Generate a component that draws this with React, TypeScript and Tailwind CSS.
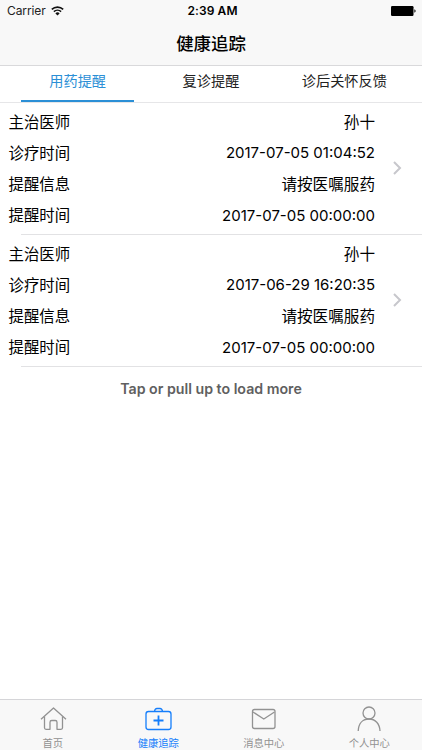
import { ReactNode } from "react";

type Reminder = {
  doctor: string;
  visitTime: string;
  message: string;
  remindTime: string;
};

const reminders: Reminder[] = [
  { doctor: "孙十", visitTime: "2017-07-05 01:04:52", message: "请按医嘱服药", remindTime: "2017-07-05 00:00:00" },
  { doctor: "孙十", visitTime: "2017-06-29 16:20:35", message: "请按医嘱服药", remindTime: "2017-07-05 00:00:00" },
];

const tabs = ["用药提醒", "复诊提醒", "诊后关怀反馈"];

function StatusBar() {
  return (
    <div className="grid h-[22px] grid-cols-3 items-center pl-[7px] pr-[6px] text-[12px] leading-[22px]">
      <div className="flex items-center gap-[5px] text-[#222]">
        <span className="tracking-[-0.1px]">Carrier</span>
        <svg width="13" height="10" viewBox="0 0 13 10" fill="none" stroke="#111" strokeWidth="1.6">
          <path d="M0.8 3.4a8.2 8.2 0 0 1 11.4 0" />
          <path d="M2.9 5.7a5.2 5.2 0 0 1 7.2 0" />
          <path d="M6.5 9.5 4.4 7.4a3 3 0 0 1 4.2 0z" fill="#111" stroke="none" />
        </svg>
      </div>
      <span className="pl-[2px] text-center font-semibold tracking-[0.1px]">2:39 AM</span>
      <svg className="justify-self-end" width="25" height="10" viewBox="0 0 25 10">
        <rect x="0" y="0" width="22.5" height="10" rx="1.2" fill="#000" />
        <path d="M23.4 3.3c1.6.6 1.6 2.8 0 3.4z" fill="#000" />
      </svg>
    </div>
  );
}

function Field({ label, value, numeric }: { label: string; value: string; numeric?: boolean }) {
  return (
    <div className="flex h-[31.2px] items-center justify-between">
      <span>{label}</span>
      <span className={numeric ? "text-[15px]" : "text-[15.6px]"}>{value}</span>
    </div>
  );
}

function ReminderRow({ item }: { item: Reminder }) {
  return (
    <li>
      <div className="flex h-[131px] items-center pl-[8.5px] pr-[20px] text-[15.4px]">
        <div className="w-[366.5px] pt-[1.2px]">
          <Field label="主治医师" value={item.doctor} />
          <Field label="诊疗时间" value={item.visitTime} numeric />
          <Field label="提醒信息" value={item.message} />
          <Field label="提醒时间" value={item.remindTime} numeric />
        </div>
        <svg className="mb-[2px] ml-[18px]" width="9" height="14" viewBox="0 0 9 14" fill="none" stroke="#c7c7cc" strokeWidth="2">
          <path d="M1 1l6 6-6 6" />
        </svg>
      </div>
      <div className="ml-[21px] h-px bg-[#e2e2e4]" />
    </li>
  );
}

function NavItem({ label, active, children }: { label: string; active?: boolean; children: ReactNode }) {
  return (
    <a className={`flex flex-1 flex-col items-center pt-[4px] ${active ? "text-[#157efb]" : "text-[#929292]"}`}>
      <svg className="shrink-0" width="30" height="30" viewBox="0 0 30 30" fill="none" stroke="currentColor" strokeWidth="1.3" strokeLinejoin="round">
        {children}
      </svg>
      <span className="text-[10.3px] leading-[18px]">{label}</span>
    </a>
  );
}

export default function App() {
  return (
    <div className="flex h-[750px] w-[422px] flex-col overflow-hidden bg-white font-[Inter,'Noto_Sans_CJK_SC',sans-serif] text-black">
      <header className="h-[66px] border-b border-[#d9d9db] bg-[#f8f8f8]">
        <StatusBar />
        <h1 className="text-center text-[17.4px] font-medium leading-[43px]">健康追踪</h1>
      </header>

      <nav className="flex h-[37px] border-b border-[#e6e6e8] px-[11px] text-[14.2px]">
        {tabs.map((tab, i) => (
          <div key={tab} className="flex-1 px-[10px]">
            <div className={`-mx-[10px] h-[34px] text-center leading-[30px] ${i === 0 ? "text-[#2b8fd6]" : "text-[#222]"}`}>{tab}</div>
            {i === 0 && <div className="h-[2px] bg-[#2b8fd6]" />}
          </div>
        ))}
      </nav>

      <main className="flex-1">
        <ul>
          {reminders.map((item) => (
            <ReminderRow key={item.visitTime} item={item} />
          ))}
        </ul>
        <p className="text-center text-[14.2px] font-semibold leading-[44px] text-[#606060]">Tap or pull up to load more</p>
      </main>

      <footer className="flex h-[51px] border-t border-[#d5d5d8] bg-[#f8f8f8]">
        <NavItem label="首页">
          <path d="M3 15.2 15.5 4 28 15.2" />
          <path d="M6.5 12.5v11.3q0 1.5 1.5 1.5h4v-7q0-1.8 1.8-1.8h3.4q1.8 0 1.8 1.8v7h4q1.5 0 1.5-1.5V12.5" />
        </NavItem>
        <NavItem label="健康追踪" active>
          <rect x="3" y="7.5" width="25" height="18" rx="2.5" />
          <path d="M11.5 7.5q.4-3 2.5-3h3q2.1 0 2.5 3" />
          <path d="M15.5 11.5v10M10.5 16.5h10" strokeWidth="1.8" />
        </NavItem>
        <NavItem label="消息中心">
          <rect x="3.5" y="5.5" width="22.5" height="19" rx="2" />
          <path d="M4 8 14.8 15 25.5 8" />
        </NavItem>
        <NavItem label="个人中心">
          <circle cx="15" cy="9" r="6" />
          <path d="M4.2 27c.3-7.5 4.500-12 10.800-12s10.700 4.500 11 12" />
        </NavItem>
      </footer>
    </div>
  );
}
